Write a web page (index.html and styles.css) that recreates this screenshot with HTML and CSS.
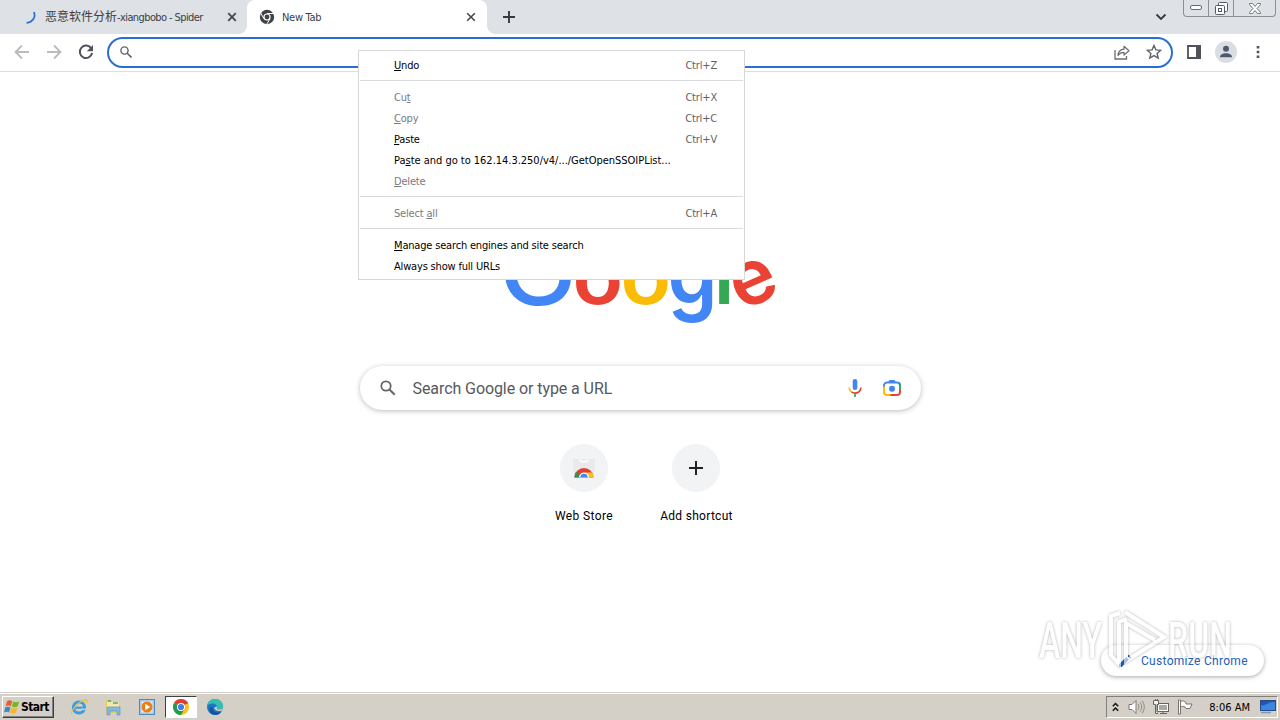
FILE: index.html
```html
<!DOCTYPE html>
<html lang="en">
<head>
  <meta charset="UTF-8" />
  <meta name="viewport" content="width=device-width, initial-scale=1.0"/>
  <title>New Tab</title>
  <link rel="stylesheet" href="styles.css">
</head>
<body>
  <div class="screen">
    <header class="tabstrip">
      <div class="tab">
        <svg class="favicon" viewBox="0 0 16 16"><path d="M12 3C14 8 11 13 4.500 14" fill="none" stroke="#2b6fd6" stroke-width="1.700"/></svg>
        <span class="tab-title tab-title-cjk"><span class="cjk">恶意软件分析</span>-xiangbobo - Spider</span>
        <svg class="close" viewBox="0 0 10 10"><path d="M1.2 1.2l7.6 7.6M8.8 1.2L1.2 8.8" stroke="#45484d" stroke-width="1.8"/></svg>
      </div>
      <div class="tab active">
        <svg class="favicon" viewBox="0 0 16 16">
          <circle cx="8" cy="8" r="7.2" fill="#3f4246"/>
          <circle cx="8" cy="8" r="3.6" fill="#fff"/>
          <circle cx="8" cy="8" r="2.4" fill="#3f4246"/>
          <path d="M8 4.5h7M5 9.8L1.5 3.8M11 9.8L7.5 15.6" stroke="#fff" stroke-width="1"/>
        </svg>
        <span class="tab-title">New Tab</span>
        <svg class="close" viewBox="0 0 10 10"><path d="M1.2 1.2l7.6 7.6M8.8 1.2L1.2 8.8" stroke="#45484d" stroke-width="1.6"/></svg>
      </div>
      <svg class="new-tab" viewBox="0 0 12 12"><path d="M6 0v12M0 6h12" stroke="#36393e" stroke-width="1.9"/></svg>
      <svg class="tab-search" viewBox="0 0 12 8"><path d="M1.5 1.5L6 6l4.500-4.500" fill="none" stroke="#36393e" stroke-width="1.8"/></svg>
      <div class="window-buttons">
        <span><svg width="13" height="6" viewBox="0 0 13 6"><rect x=".5" y=".5" width="11" height="4" rx="1.500" fill="#fff" stroke="#666b73"/></svg></span>
        <span><svg width="13" height="13" viewBox="0 0 13 13"><rect x="3.500" y=".5" width="9" height="9" rx="1" fill="#fff" stroke="#555a62"/><rect x=".5" y="3.500" width="9" height="9" rx="1" fill="#fff" stroke="#555a62"/><rect x="3.500" y="6.500" width="3" height="3" fill="#fff" stroke="#555a62"/></svg></span>
        <span class="wide"><svg width="12" height="11" viewBox="0 0 12 11"><path d="M.5.5h3L6 3.500 8.500.5h3v1L8 5.500l3.500 4v1h-3L6 7.500l-2.500 3h-3v-1l3.500-4-3.500-4z" fill="#fff" stroke="#666b73" stroke-width=".9"/></svg></span>
      </div>
    </header>

    <div class="toolbar">
      <svg class="nav" viewBox="0 0 16 16"><path d="M15 8H2M8 1.500L1.500 8 8 14.500" fill="none" stroke="#b9bbbe" stroke-width="1.8"/></svg>
      <svg class="nav" viewBox="0 0 16 16"><path d="M1 8h13M8 1.500L14.500 8 8 14.500" fill="none" stroke="#b9bbbe" stroke-width="1.8"/></svg>
      <svg class="nav" viewBox="0 0 16 16"><path d="M13.300 4.500A6.200 6.200 0 1 0 14.100 9" fill="none" stroke="#505357" stroke-width="2"/><path d="M15 1v6.200H8.800z" fill="#505357"/></svg>
      <div class="omnibox">
        <svg class="lens" viewBox="0 0 12 12"><circle cx="4.500" cy="4.500" r="3.600" fill="none" stroke="#5f6368" stroke-width="1.400"/><path d="M7.200 7.200l4.300 4.300" stroke="#5f6368" stroke-width="1.600"/></svg>
        <svg class="share" viewBox="0 0 16 15"><path d="M1 5v9h11.500v-3" fill="none" stroke="#6b6e73" stroke-width="1.300"/><path d="M4 10.500c.3-4 2.500-6 6-6.300V1.300l5 4.400-5 4.300V7.300c-2.600 0-4.500 1-6 3.200z" fill="none" stroke="#6b6e73" stroke-width="1.200" stroke-linejoin="round"/></svg>
        <svg class="star" viewBox="0 0 16 16"><path d="M8 1.500l1.900 4.400 4.800.4-3.600 3.100 1.100 4.700L8 11.600l-4.200 2.500 1.100-4.700L1.300 6.300l4.800-.4z" fill="none" stroke="#5f6368" stroke-width="1.400"/></svg>
      </div>
      <svg class="side-panel" viewBox="0 0 14 14"><path d="M1 1h12v12H1z" fill="none" stroke="#505357" stroke-width="1.800"/><path d="M9 0h5v14H9z" fill="#505357"/></svg>
      <svg class="avatar" viewBox="0 0 22 22"><circle cx="11" cy="11" r="11" fill="#dadde2"/><circle cx="11" cy="7.800" r="3" fill="#4e5870"/><path d="M5 16.200c0-3 3-4 6-4s6 1 6 4z" fill="#4e5870"/></svg>
      <svg class="dots" viewBox="0 0 4 14"><path d="M.7 1h2.600v2.600H.7zM.7 5.700h2.600v2.600H.7zM.7 10.400h2.600V13H.7z" fill="#505357"/></svg>
    </div>

    <main class="page">
      <svg class="logo" viewBox="500 230 280 100">
        <text class="g-blue cap" transform="translate(499 304.500) scale(1.120 1)">G</text>
        <text class="g-red" transform="translate(572.500 304) scale(1.080 1)">o</text>
        <text class="g-yellow" transform="translate(620.500 304) scale(1.080 1)">o</text>
        <text class="g-blue" transform="translate(667.500 304) scale(1.040 1.150)">g</text>
        <text class="g-green" transform="translate(714 303.500)">l</text>
        <text class="g-red" transform="translate(753 283) rotate(-24) translate(-22.500 21)">e</text>
      </svg>

      <div class="search">
        <svg class="search-lens" viewBox="0 0 16 16"><circle cx="6" cy="6" r="4.700" fill="none" stroke="#666" stroke-width="1.800"/><path d="M9.500 9.500l5.200 5.200" stroke="#666" stroke-width="2"/></svg>
        <span class="search-hint">Search Google or type a URL</span>
        <svg class="mic" viewBox="0 0 14 18">
          <rect x="4.700" y="0" width="4.600" height="11" rx="2.300" fill="#4285f4"/>
          <path d="M1.200 8.500c0 2 1 3.600 2.300 4.400" fill="none" stroke="#fbbc04" stroke-width="1.700"/>
          <path d="M3.400 12.900c3.500 2.300 9.300 1 9.400-4.400" fill="none" stroke="#ea4335" stroke-width="1.700"/>
          <path d="M7 14v4" stroke="#34a853" stroke-width="1.700"/>
        </svg>
        <svg class="camera" viewBox="0 0 18 18">
          <path d="M1 8V6.500A3 3 0 0 1 4 3.500h10a3 3 0 0 1 3 3V8" fill="none" stroke="#4285f4" stroke-width="1.900"/>
          <path d="M5 3.500L6.500 1h5L13 3.500z" fill="#4285f4"/>
          <path d="M1 7.500V13a3 3 0 0 0 3 3h4" fill="none" stroke="#fbbc04" stroke-width="1.900"/>
          <path d="M7.500 16H14a3 3 0 0 0 3-3v-3" fill="none" stroke="#ea4335" stroke-width="1.900"/>
          <path d="M15.500 4a3 3 0 0 1 1.500 2.500V10" fill="none" stroke="#34a853" stroke-width="1.900"/>
          <circle cx="9" cy="9.700" r="3" fill="#4285f4"/>
        </svg>
      </div>

      <div class="shortcuts">
        <div class="shortcut">
          <div class="bubble">
            <svg width="24" height="24" viewBox="0 0 24 24">
              <path d="M1 3h22v9l-2 9H3l-2-9z" fill="#e9eaeb"/>
              <path d="M8 3.500c0 3 8 3 8 0" fill="none" stroke="#fff" stroke-width="1.400"/>
              <path d="M2.500 21.500A9.500 9.500 0 0 1 21.500 21.500z" fill="#e2402f"/>
              <path d="M2.500 21.500c0-2.500.6-4.300 1.700-6l4.300 6z" fill="#249a50"/>
              <path d="M21.500 21.500c0-2-.4-3.500-1.300-5h-6.500v5z" fill="#fbc116"/>
              <path d="M7 21.500a5 5 0 0 1 10 0z" fill="#fff"/>
              <path d="M8.300 21.500a3.700 3.700 0 0 1 7.400 0z" fill="#4285f4"/>
            </svg>
          </div>
          <span class="shortcut-name">Web Store</span>
        </div>
        <div class="shortcut">
          <div class="bubble">
            <svg width="14" height="14" viewBox="0 0 14 14"><path d="M7 0v14M0 7h14" stroke="#202124" stroke-width="2"/></svg>
          </div>
          <span class="shortcut-name add">Add shortcut</span>
        </div>
      </div>

      <div class="customize">
        <svg width="14" height="14" viewBox="0 0 14 14"><path d="M1 13v-2.700l7.300-7.300L11 5.700 3.700 13zM9.200 2.100L10.600.7 13.300 3.400l-1.400 1.400z" fill="#2361ba"/></svg>
        <span>Customize Chrome</span>
      </div>
    </main>

    <footer class="taskbar">
      <div class="start">
        <svg width="17" height="16" viewBox="0 0 17 16">
          <path d="M3 2.200C5 1 6.500 1.200 8.200 2.200L6.800 7.300C5 6.300 3.500 6.300 1.600 7.200z" fill="#e8602c"/>
          <path d="M9.200 2.600c2 1 3.700 1 6 0l-1.500 5c-2 1-3.800 1-5.900 0z" fill="#76b729"/>
          <path d="M1.300 8.300C3.200 7.400 4.800 7.400 6.500 8.400l-1.400 5C3.500 12.400 2 12.400 0 13.300z" fill="#3e87d0"/>
          <path d="M7.500 8.700c2 1 3.900 1 5.900 0l-1.500 5c-2 1-3.800 1-5.800 0z" fill="#f6b81e"/>
        </svg>
        <span>Start</span>
      </div>
      <div class="quick">
        <svg viewBox="0 0 18 18">
          <circle cx="9" cy="9.500" r="5.600" fill="none" stroke="#3a9ee0" stroke-width="3"/>
          <path d="M5 9.700h10" stroke="#3a9ee0" stroke-width="2.200"/>
          <path d="M11 11.200h5" stroke="#d4d0c8" stroke-width="1.400"/>
          <path d="M2 16C-.5 14 9 2.500 15.500 1.800c2 0 1.600 2 .8 3.200" fill="none" stroke="#e9bd3c" stroke-width="1.300"/>
        </svg>
      </div>
      <div class="quick">
        <svg viewBox="0 0 18 18">
          <path d="M2 2h5l1 2h8v11H2z" fill="#e8c964"/>
          <path d="M3 4h12v8H3z" fill="#f7e9a5"/>
          <path d="M4 3h3M9 5h5" stroke="#55a96d" stroke-width="1.300"/>
          <path d="M3 9h13v8h-3v-4H6v4H3z" fill="#7dbbe0" stroke="#5b9bc5" stroke-width=".7"/>
        </svg>
      </div>
      <div class="quick">
        <svg viewBox="0 0 18 18">
          <rect x="1.500" y="1.500" width="15" height="15" fill="#a9cbe9" stroke="#4f86bb"/>
          <rect x="3.500" y="3.500" width="11" height="11" fill="#dcebf8"/>
          <circle cx="9" cy="9" r="5.500" fill="#ef7d16"/>
          <path d="M7.200 5.800v6.400l5-3.200z" fill="#fff"/>
        </svg>
      </div>
      <div class="quick pressed">
        <svg viewBox="0 0 18 18">
          <circle cx="9" cy="9" r="8" fill="#fbc116"/>
          <path d="M9 9L2.070 5A8 8 0 0 1 15.930 5z" fill="#e33b2e"/>
          <path d="M2.070 5A8 8 0 0 0 9 17l3.500-6L9 9z" fill="#249a50"/>
          <path d="M9 5h6.930" stroke="#e33b2e" stroke-width="1"/>
          <circle cx="9" cy="9" r="4" fill="#fff"/>
          <circle cx="9" cy="9" r="3.100" fill="#3f7fe8"/>
        </svg>
      </div>
      <div class="quick">
        <svg viewBox="0 0 18 18">
          <circle cx="9" cy="9" r="8" fill="#1c74c4"/>
          <path d="M1.200 8C2 3 6 1 9 1c5 0 8 3.500 8 7 0 2.500-2 4-4.500 4-2 0-2.500-1-1.500-2 .5-3-2-4.500-4.500-4.500-2.500 0-4.500 1-5.300 2.500z" fill="#35bfae"/>
          <path d="M6.500 9c-.5 4 3 6.500 8.500 5-3 4.500-11 3.500-11.500-2C3.400 10 4.500 8.500 6.500 9z" fill="#14539c"/>
          <path d="M8.200 9.500c.2 3 4 4.500 7.800 3l1-2.500c-2 2-6 2.300-6.200.5 0-.7.500-1 .2-2z" fill="#d4d0c8"/>
        </svg>
      </div>
      <div class="tray">
        <svg class="chevrons" viewBox="0 0 7 10"><path d="M.8 4.200l2.700-2.700 2.700 2.700M.8 8.700L3.500 6l2.700 2.700" fill="none" stroke="#111" stroke-width="1.500"/></svg>
        <svg class="speaker" viewBox="0 0 17 16"><path d="M1 5.500h3l4-4v13l-4-4H1z" fill="#fff" stroke="#7b7872"/><path d="M10 5c1.300 1.800 1.300 4.200 0 6M12 3.300c2.200 2.700 2.200 6.700 0 9.400M14 1.700c3 3.600 3 9 0 12.600" fill="none" stroke="#8b8882"/></svg>
        <svg class="network" viewBox="0 0 16 16"><rect x="4.500" y="4.500" width="11" height="8" fill="#aaa8a4" stroke="#66645f"/><rect x="5.500" y="5.500" width="9" height="6" fill="none" stroke="#fff"/><path d="M7 14.500h7M10 12.500v2" stroke="#66645f"/><path d="M.5 1.500h5v4H4V13h1M2.500 0v2M4.500 0v2M.5 2v3.500h2v9H5" fill="#f4f3f0" stroke="#66645f"/></svg>
        <svg class="flag" viewBox="0 0 17 16"><path d="M1.500 1h2v14h-2z" fill="#fff" stroke="#77746f"/><path d="M3.500 2.500c3-1.500 4 0 5.500 1v1.500h6l-2 4.500H9l-1-1.500c-1.500-1-3-.8-4.500 0z" fill="#fff" stroke="#77746f"/></svg>
        <span class="clock">8:06 AM</span>
        <svg class="desktop" viewBox="0 0 16 14"><rect x=".5" y=".5" width="15" height="10" fill="#1c57b8" stroke="#2a4a86"/><path d="M1 10V5C5 7 9 1 15 2v8z" fill="#3d86e0"/><path d="M1 12.500h10" stroke="#7a96bd" stroke-width="1.500"/></svg>
      </div>
    </footer>

    <div class="menu">
      <div class="item"><span><u>U</u>ndo</span><kbd>Ctrl+Z</kbd></div>
      <hr>
      <div class="item disabled"><span>Cu<u>t</u></span><kbd>Ctrl+X</kbd></div>
      <div class="item disabled"><span><u>C</u>opy</span><kbd>Ctrl+C</kbd></div>
      <div class="item"><span><u>P</u>aste</span><kbd>Ctrl+V</kbd></div>
      <div class="item"><span class="paste-go">Pa<u>s</u>te and go to 162.14.3.250/v4/.../GetOpenSSOIPList...</span></div>
      <div class="item disabled"><span><u>D</u>elete</span></div>
      <hr>
      <div class="item disabled"><span>Select <u>a</u>ll</span><kbd>Ctrl+A</kbd></div>
      <hr>
      <div class="item"><span class="manage"><u>M</u>anage search engines and site search</span></div>
      <div class="item"><span>Always show full URLs</span></div>
    </div>

    <svg class="watermark" viewBox="0 0 210 70">
      <g class="mark">
        <text x="9" y="50" textLength="63" lengthAdjust="spacingAndGlyphs">ANY</text>
        <text x="138" y="50" textLength="64" lengthAdjust="spacingAndGlyphs">RUN</text>
        <path d="M90 5l-9 3v39l8 9V14l8-3M95 4l39 25-38 24V15l29 17" fill="none" stroke="#fff" stroke-width="4"/>
      </g>
    </svg>
  </div>
</body>
</html>
```
FILE: styles.css
```css
* {
  box-sizing: border-box;
}

body {
  margin: 0;
  font-family: "DejaVu Sans Condensed", "DejaVu Sans", sans-serif;
  font-size: 11px;
  background: #fff;
  overflow: hidden;
}

svg {
  display: block;
  flex: none;
}

span {
  white-space: nowrap;
}

.screen {
  position: relative;
  display: flex;
  flex-direction: column;
  width: 1280px;
  height: 720px;
}

/* tabs */
.tabstrip {
  display: flex;
  align-items: center;
  height: 34px;
  background: #dee1e6;
}

.tab {
  display: flex;
  align-items: center;
  width: 247px;
  height: 34px;
  padding: 0 10px 0 22px;
  color: #3c4043;
}

.tab.active {
  position: relative;
  width: 240px;
  padding: 0 11px 0 12px;
  background: #fff;
  border-radius: 8px 8px 0 0;
}

.tab.active::before,
.tab.active::after {
  content: "";
  position: absolute;
  bottom: 0;
  width: 8px;
  height: 8px;
}

.tab.active::before {
  left: -8px;
  background: radial-gradient(circle at 0 0, #dee1e6 7.5px, #fff 8px);
}

.tab.active::after {
  right: -8px;
  background: radial-gradient(circle at 100% 0, #dee1e6 7.5px, #fff 8px);
}

.favicon {
  width: 16px;
  height: 16px;
  margin-right: 7px;
}

.tab-title {
  flex: 1;
  letter-spacing: -0.3px;
}

.tab-title-cjk {
  padding-bottom: 3px;
  letter-spacing: -0.6px;
}

.cjk {
  font-family: "Noto Sans CJK SC", sans-serif;
  font-size: 12px;
  letter-spacing: 0;
}

.close {
  width: 10px;
  height: 10px;
}

.new-tab {
  width: 12px;
  height: 12px;
  margin-left: 16px;
}

.tab-search {
  width: 12px;
  height: 8px;
  margin-left: auto;
}

.window-buttons {
  display: flex;
  align-self: flex-start;
  width: 93px;
  height: 17px;
  margin: 0 4px 0 16px;
  border: 1px solid #8b9098;
  border-top: none;
  border-radius: 0 0 4px 4px;
}

.window-buttons span {
  display: flex;
  align-items: center;
  justify-content: center;
  width: 25px;
  border-right: 1px solid #8b9098;
}

.window-buttons span.wide {
  flex: 1;
  border-right: none;
}

/* toolbar */
.toolbar {
  display: flex;
  align-items: center;
  height: 38px;
  padding: 0 20px 1px 14px;
  border-bottom: 1px solid #dcdee0;
}

.nav {
  width: 16px;
  height: 16px;
  margin-right: 16px;
}

.omnibox {
  display: flex;
  align-items: center;
  width: 1066px;
  height: 31px;
  margin-left: -3px;
  padding: 0 9px 0 11px;
  border: 2px solid #2a6fd0;
  border-radius: 16px;
}

.lens {
  width: 12px;
  height: 12px;
}

.share {
  width: 16px;
  height: 15px;
  margin: 0 16px 0 auto;
}

.star {
  width: 16px;
  height: 16px;
}

.side-panel {
  width: 14px;
  height: 14px;
  margin-left: 14px;
}

.avatar {
  width: 22px;
  height: 22px;
  margin-left: 14px;
}

.dots {
  width: 4px;
  height: 14px;
  margin-left: auto;
}

/* new tab page */
.page {
  position: relative;
  display: flex;
  flex-direction: column;
  align-items: center;
  flex: 1;
  padding-top: 158px;
}

.logo {
  width: 280px;
  height: 100px;
}

.logo text {
  font-family: Inter, sans-serif;
  font-size: 77px;
  font-weight: 600;
}

.logo .cap {
  font-size: 93px;
  font-weight: 500;
}

.g-blue {
  fill: #4285f4;
}

.g-red {
  fill: #ea4335;
}

.g-yellow {
  fill: #fbbc05;
}

.g-green {
  fill: #34a853;
}

.search {
  display: flex;
  align-items: center;
  width: 561px;
  height: 44px;
  margin-top: 36px;
  padding: 0 20px;
  border-radius: 22px;
  box-shadow: 0 1px 5px rgba(32,33,36,0.3);
}

.search-lens {
  width: 16px;
  height: 16px;
}

.search-hint {
  margin-left: 17px;
  font-family: Roboto, sans-serif;
  font-size: 16px;
  letter-spacing: -0.08px;
  color: #56595d;
}

.mic {
  width: 14px;
  height: 18px;
  margin-left: auto;
}

.camera {
  width: 18px;
  height: 18px;
  margin-left: 21px;
}

.shortcuts {
  display: flex;
  margin-top: 34px;
}

.shortcut {
  display: flex;
  flex-direction: column;
  align-items: center;
  width: 112px;
}

.bubble {
  display: flex;
  align-items: center;
  justify-content: center;
  width: 48px;
  height: 48px;
  background: #f1f3f4;
  border-radius: 50%;
}

.shortcut-name {
  margin-top: 16px;
  font-family: Roboto, sans-serif;
  font-size: 12px;
  line-height: 16px;
  letter-spacing: 0.4px;
  color: #000;
}

.shortcut-name.add {
  padding-left: 1px;
  letter-spacing: 0.3px;
}

.customize {
  position: absolute;
  right: 16px;
  bottom: 16px;
  display: flex;
  align-items: center;
  width: 163px;
  height: 31px;
  padding-left: 17px;
  border-radius: 16px;
  background: #fff;
  box-shadow: 0 1px 4px rgba(0,0,0,0.35);
  font-family: Roboto, sans-serif;
  font-size: 12px;
  letter-spacing: 0.3px;
  color: #2361ba;
}

.customize span {
  margin-left: 9px;
}

/* taskbar */
.taskbar {
  display: flex;
  align-items: center;
  height: 28px;
  padding: 1px 2px 0;
  background: #d4d0c8;
  border-top: 1px solid #d4d0c8;
  box-shadow: inset 0 1px #fff;
}

.start {
  display: flex;
  align-items: center;
  width: 52px;
  height: 22px;
  margin-right: 9px;
  padding-left: 1px;
  border: 1px solid;
  border-color: #fff #404040 #404040 #fff;
  box-shadow: inset -1px -1px #808080;
  font-size: 12px;
  font-weight: bold;
  color: #000;
}

.start span {
  letter-spacing: -0.6px;
}

.quick {
  display: flex;
  align-items: center;
  justify-content: center;
  width: 32px;
  height: 22px;
  margin-right: 2px;
}

.quick svg {
  width: 18px;
  height: 18px;
}

.quick.pressed {
  background: #fff;
  border: 1px solid;
  border-color: #404040 #fff #fff #404040;
}

.tray {
  display: flex;
  align-items: center;
  width: 172px;
  height: 22px;
  margin-left: auto;
  padding: 0 1px 0 5px;
  border: 1px solid;
  border-color: #808080 #fff #fff #808080;
}

.chevrons {
  width: 7px;
  height: 10px;
}

.speaker {
  width: 17px;
  height: 16px;
  margin-left: 9px;
}

.network {
  width: 16px;
  height: 16px;
  margin-left: 8px;
}

.flag {
  width: 17px;
  height: 16px;
  margin-left: 8px;
}

.clock {
  margin-left: auto;
  margin-right: 10px;
  letter-spacing: 0;
  color: #000;
}

.desktop {
  width: 16px;
  height: 14px;
}

/* context menu */
.menu {
  position: absolute;
  left: 358px;
  top: 50px;
  width: 387px;
  height: 230px;
  padding: 3px 0;
  border: 1px solid #d5d7d9;
  background: #fff;
  color: #000;
}

.item {
  display: flex;
  align-items: center;
  justify-content: space-between;
  height: 21px;
  padding: 2px 27px 0 35px;
  letter-spacing: -0.18px;
}

.item kbd {
  font-family: inherit;
  font-size: 11px;
  color: #5f6368;
}

.item.disabled {
  color: #787b7f;
}

.item u {
  text-underline-offset: 1px;
}

.paste-go {
  letter-spacing: -0.02px;
}

.menu hr {
  height: 1px;
  margin: 5px 1px;
  border: none;
  background: #d9dbdd;
}

/* translucent mark in the corner */
.watermark {
  position: absolute;
  left: 1030px;
  top: 608px;
  width: 210px;
  height: 70px;
  opacity: 0.6;
}

.mark {
  filter: drop-shadow(0 0 1.5px rgba(0,0,0,0.5));
}

.mark text {
  font-family: Roboto, sans-serif;
  font-size: 50px;
  font-weight: 500;
  fill: #fff;
}
```
